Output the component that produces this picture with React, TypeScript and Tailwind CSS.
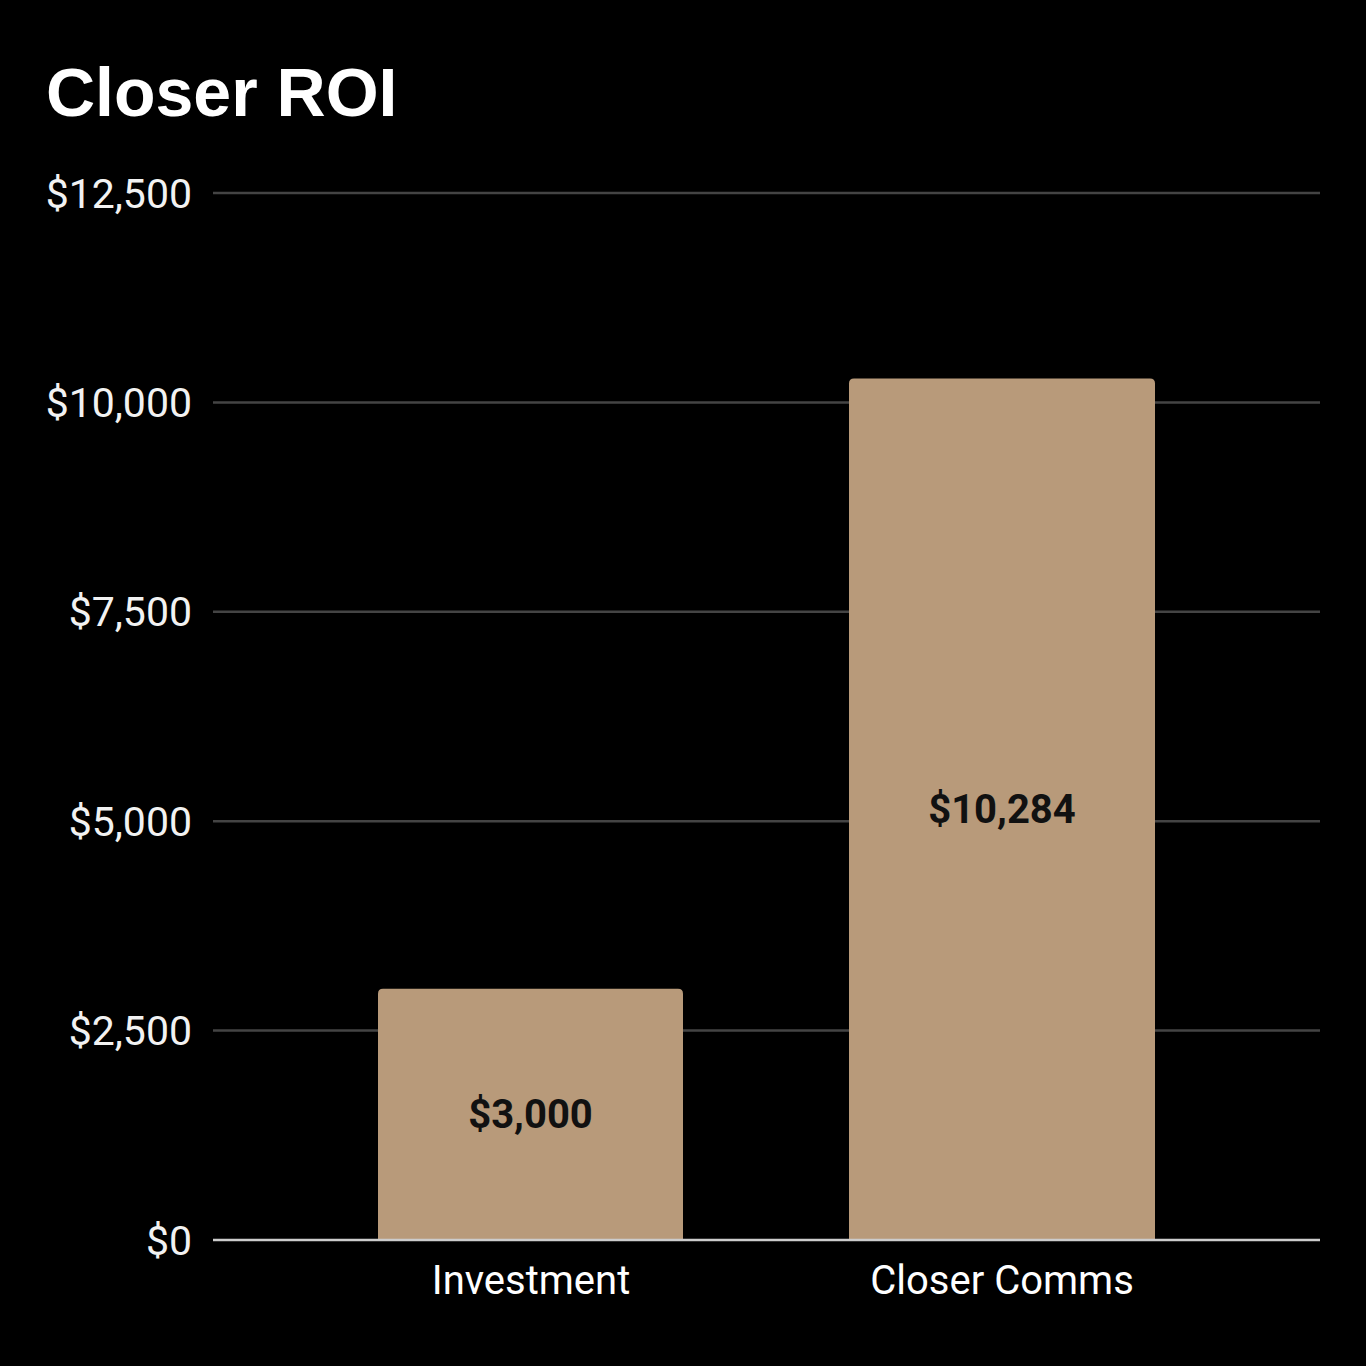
import React from "react";

const top = 193;
const bottom = 1240;
const max = 12500;
const yOf = (v: number) => bottom - (v / max) * (bottom - top);

const ticks = [12500, 10000, 7500, 5000, 2500, 0];
const fmt = (v: number) => "$" + v.toLocaleString("en-US");

const bars = [
  { label: "Investment", value: 3000, x: 378, w: 305, cx: 531 },
  { label: "Closer Comms", value: 10284, x: 849, w: 306, cx: 1002 },
];

function barPath(x: number, y: number, w: number, h: number, r: number) {
  return `M${x},${y + h} L${x},${y + r} Q${x},${y} ${x + r},${y} L${x + w - r},${y} Q${x + w},${y} ${x + w},${y + r} L${x + w},${y + h} Z`;
}

export default function App() {
  return (
    <div className="w-[1366px] h-[1366px] bg-black flex flex-col">
      <div className="pt-[59px] pl-[46px] text-white font-bold text-[68px] leading-[67px] font-['Liberation_Sans',Arial,sans-serif]">
        Closer ROI
      </div>
      <svg
        width={1366}
        height={1240}
        viewBox="0 126 1366 1240"
        className="block font-['Roboto',sans-serif]"
      >
        {ticks.map((t) =>
          t === 0 ? null : (
            <line
              key={t}
              x1={213}
              x2={1320}
              y1={yOf(t)}
              y2={yOf(t)}
              stroke="#444444"
              strokeWidth={2.5}
            />
          )
        )}
        {bars.map((b) => {
          const y = yOf(b.value);
          return (
            <g key={b.label}>
              <path d={barPath(b.x, y, b.w, bottom - y, 5)} fill="#b89a7a" />
              <text
                x={b.x + b.w / 2}
                y={(y + bottom) / 2 + 14}
                textAnchor="middle"
                fontSize={40}
                fontWeight={700}
                fill="#111111"
              >
                {fmt(b.value)}
              </text>
              <text
                x={b.cx}
                y={1294}
                textAnchor="middle"
                fontSize={40}
                fill="#ffffff"
              >
                {b.label}
              </text>
            </g>
          );
        })}
        <line x1={213} x2={1320} y1={bottom} y2={bottom} stroke="#cccccc" strokeWidth={2.5} />
        {ticks.map((t) => (
          <text
            key={"l" + t}
            x={192}
            y={yOf(t) + 14.5}
            textAnchor="end"
            fontSize={41}
            fill="#f2f2f2"
          >
            {fmt(t)}
          </text>
        ))}
      </svg>
    </div>
  );
}
